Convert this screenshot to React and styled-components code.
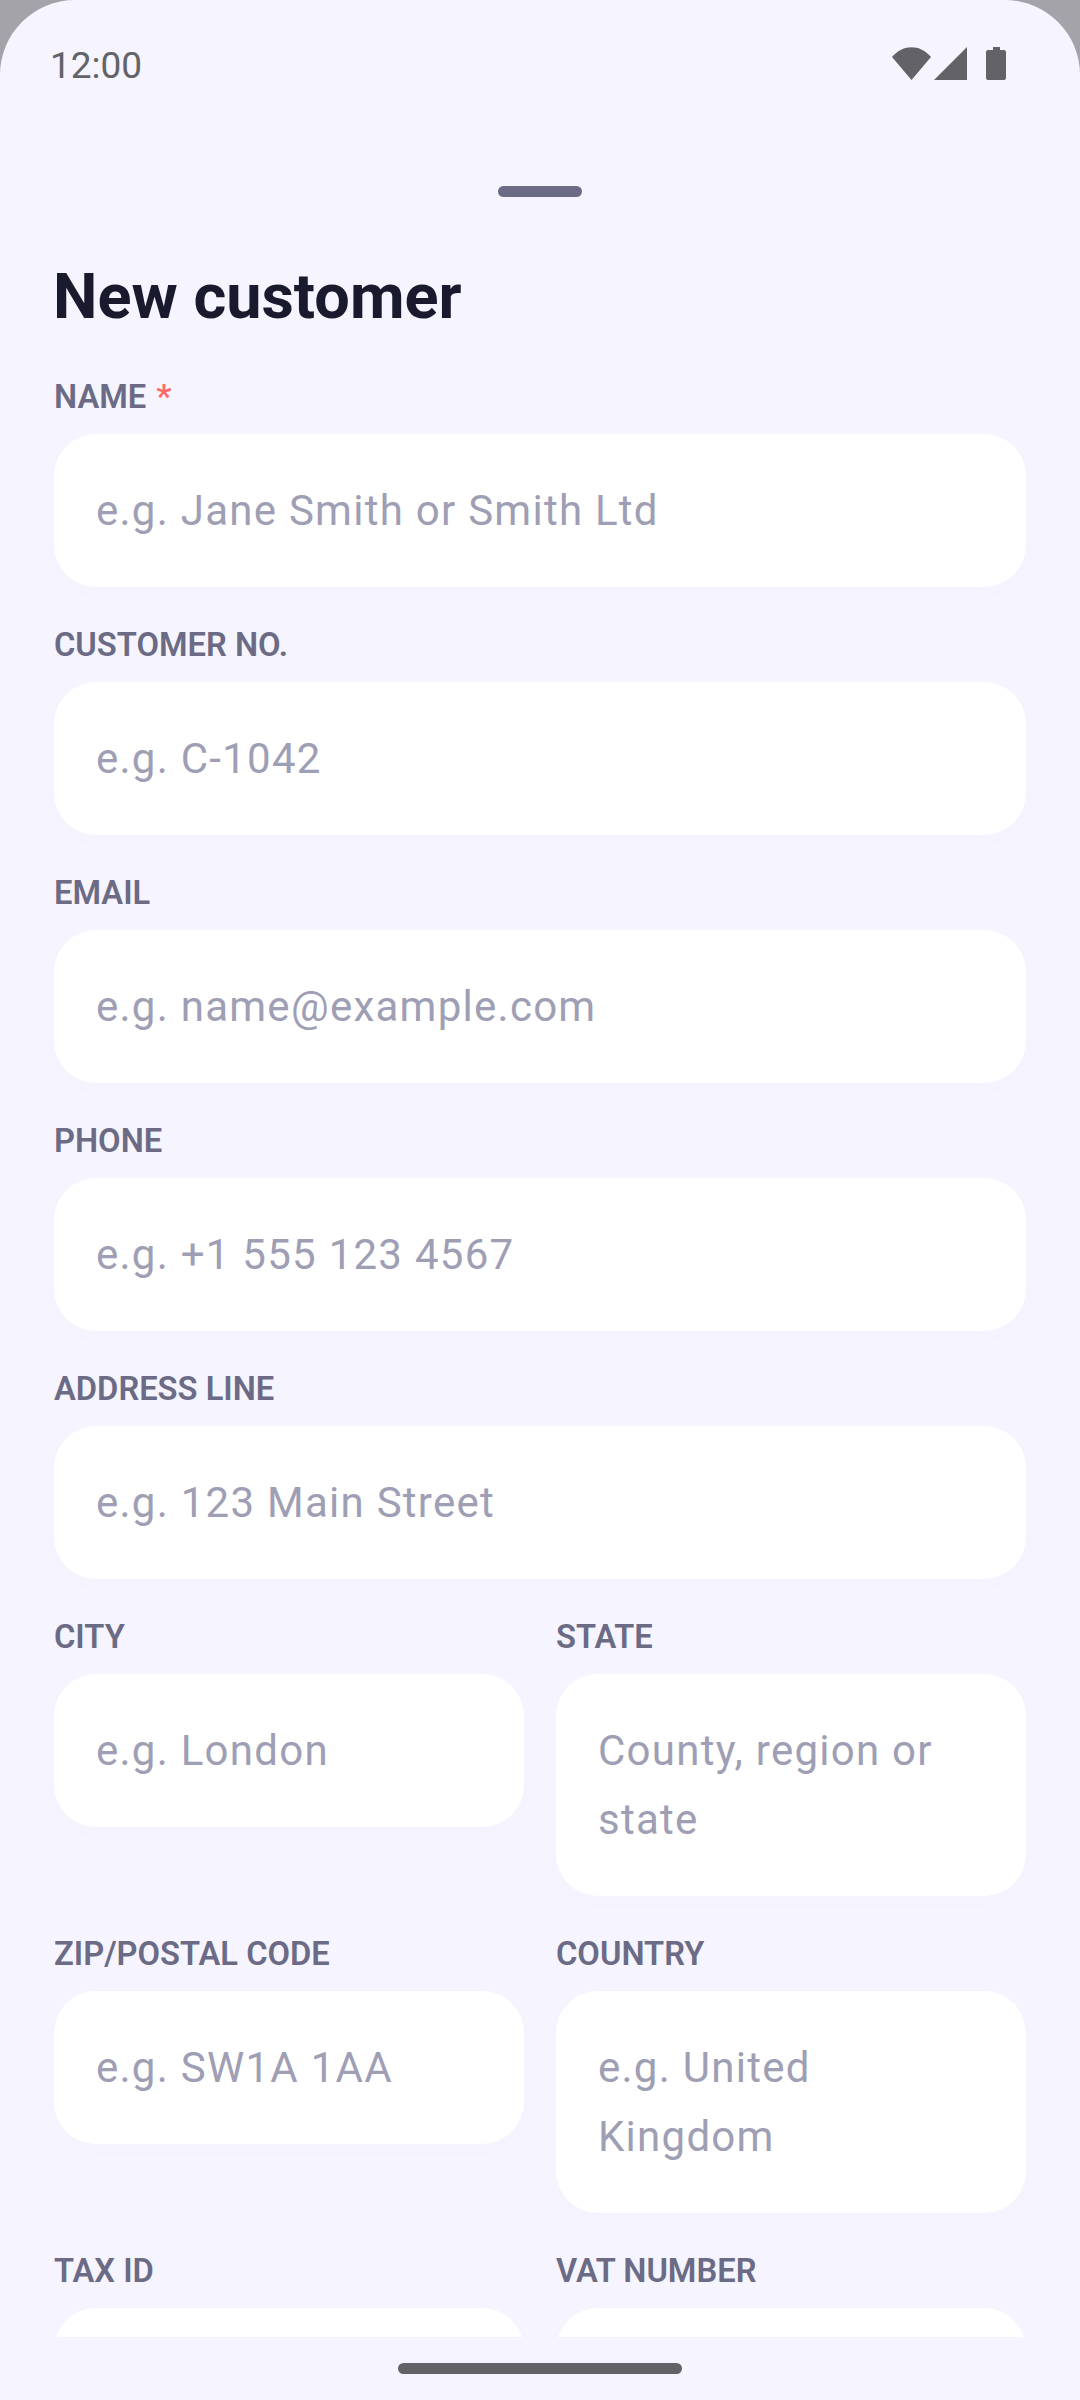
import React from "react";
import styled, { createGlobalStyle } from "styled-components";

const GlobalStyle = createGlobalStyle`
  html, body {
    margin: 0;
    padding: 0;
    background: #a5a3aa;
  }
  * {
    box-sizing: border-box;
  }
`;

const Screen = styled.div`
  width: 1080px;
  height: 2400px;
  background: #f6f4ff;
  border-radius: 75px 75px 0 0;
  font-family: Roboto, sans-serif;
  display: flex;
  flex-direction: column;
  overflow: hidden;
`;

const StatusBar = styled.div`
  height: 130px;
  flex: none;
  display: flex;
  justify-content: space-between;
  align-items: flex-start;
  padding: 44px 74px 0 50px;
  color: #636367;
`;

const Clock = styled.div`
  font-size: 37px;
  line-height: 44px;
`;

const StatusIcons = styled.svg`
  display: block;
  margin-top: 3px;
`;

const Handle = styled.div`
  width: 84px;
  height: 11px;
  flex: none;
  margin: 56px auto 0;
  border-radius: 6px;
  background: #6b6b85;
`;

const Title = styled.h1`
  margin: 63px 0 0;
  padding: 0 53px;
  flex: none;
  font-size: 63px;
  line-height: 74px;
  font-weight: 700;
  color: #1a1a2e;
`;

const Form = styled.div`
  flex: 1;
  min-height: 0;
  overflow: hidden;
  margin-top: 43px;
  padding: 0 54px;
  display: grid;
  grid-template-columns: 470px 470px;
  column-gap: 32px;
  row-gap: 39px;
  align-content: start;
`;

const Field = styled.div`
  grid-column: ${(p) => (p.$half ? "auto" : "1 / -1")};
`;

const Label = styled.div`
  font-size: 32.7px;
  line-height: 39px;
  font-weight: 600;
  color: #6b6b85;
  margin-bottom: 17px;
`;

const Required = styled.span`
  color: #ff6b6b;
  margin-left: 10px;
  font-size: 34px;
`;

const Input = styled.div`
  background: #ffffff;
  border-radius: 42px;
  padding: 42px 42px;
  font-size: 42px;
  line-height: 69px;
  letter-spacing: 1.26px;
  color: #9e9eb4;
  box-shadow: 0 6px 18px rgba(107, 107, 133, 0.015);
`;

const BottomBar = styled.div`
  height: 63px;
  flex: none;
  padding-top: 26px;
`;

const HomeIndicator = styled.div`
  width: 284px;
  height: 11px;
  margin: 0 auto;
  border-radius: 6px;
  background: #636367;
`;

const fields = [
  { label: "NAME", hint: "e.g. Jane Smith or Smith Ltd", required: true },
  { label: "CUSTOMER NO.", hint: "e.g. C-1042" },
  { label: "EMAIL", hint: "e.g. name@example.com" },
  { label: "PHONE", hint: "e.g. +1 555 123 4567" },
  { label: "ADDRESS LINE", hint: "e.g. 123 Main Street" },
  { label: "CITY", hint: "e.g. London", half: true },
  { label: "STATE", hint: "County, region or state", half: true },
  { label: "ZIP/POSTAL CODE", hint: "e.g. SW1A 1AA", half: true },
  { label: "COUNTRY", hint: "e.g. United Kingdom", half: true },
  { label: "TAX ID", hint: "", half: true },
  { label: "VAT NUMBER", hint: "", half: true },
];

const App = () => {
  return (
    <>
      <GlobalStyle />
      <Screen>
        <StatusBar>
          <Clock>12:00</Clock>
          <StatusIcons width="114" height="34" viewBox="0 0 114 34">
            <path d="M0 10 C11 -3 28 -3 39 10 L19.5 33 Z" fill="#636367" />
            <path d="M42 33 L75 0 L75 33 Z" fill="#636367" />
            <path d="M101 0 H108 V3 H112 Q114 3 114 5 V31 Q114 33 112 33 H96 Q94 33 94 31 V5 Q94 3 96 3 H101 Z" fill="#636367" />
          </StatusIcons>
        </StatusBar>
        <Handle />
        <Title>New customer</Title>
        <Form>
          {fields.map((f) => (
            <Field key={f.label} $half={f.half}>
              <Label>
                {f.label}
                {f.required && <Required>*</Required>}
              </Label>
              <Input>{f.hint || "\u00a0"}</Input>
            </Field>
          ))}
        </Form>
        <BottomBar>
          <HomeIndicator />
        </BottomBar>
      </Screen>
    </>
  );
};

export default App;
